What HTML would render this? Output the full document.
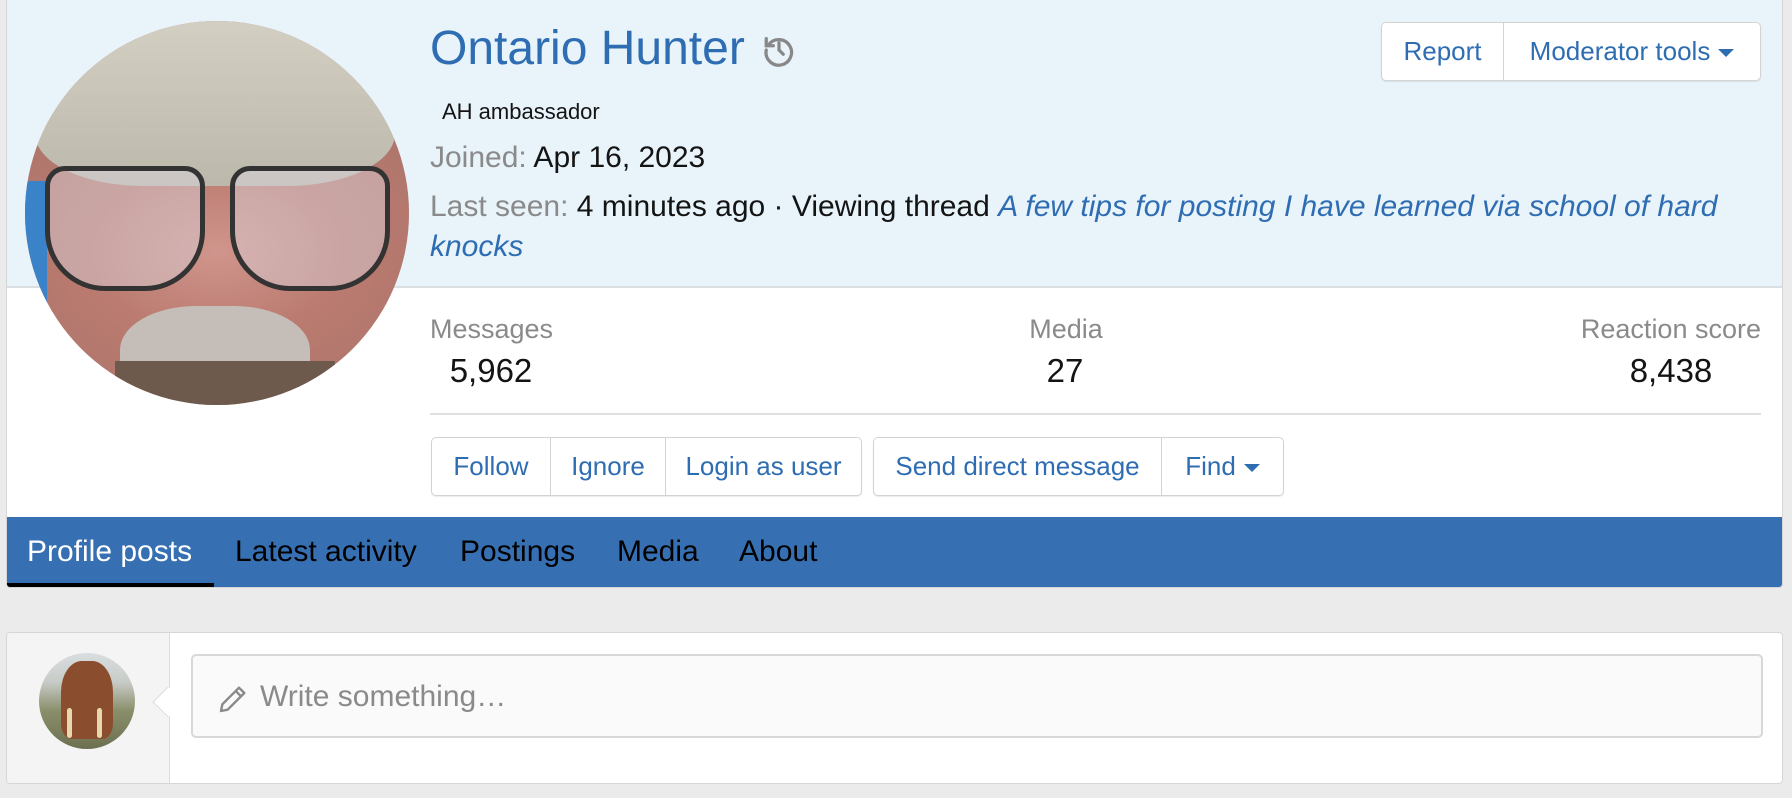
<!DOCTYPE html>
<html><head><meta charset="utf-8"><style>
*{box-sizing:border-box;margin:0;padding:0}
body{width:1792px;height:798px;background:#ebebeb;font-family:"Liberation Sans",Arial,sans-serif;position:relative;overflow:hidden;color:#141414}
.abs{position:absolute;white-space:nowrap}
.card{position:absolute;left:6px;top:0;width:1777px;height:588px;background:#fff;border:1px solid #d6d6d6;border-top:none;border-radius:0 0 4px 4px;overflow:hidden}
.band{position:absolute;left:0;top:0;width:100%;height:288px;background:#e8f3fa;border-bottom:2px solid #dcdfe2}
.blue{color:#2f6db3}
.grey{color:#8a8a8a}
.btn{position:absolute;height:59px;border:1px solid #d3d3d3;border-radius:5px;background:#fff;display:flex;box-shadow:0 1px 1px rgba(0,0,0,.08)}
.btn div{display:flex;align-items:center;justify-content:center;color:#2f6db3;font-size:26px;border-left:1px solid #d3d3d3;height:100%;white-space:nowrap}
.btn div:first-child{border-left:none}
.tri{display:inline-block;width:0;height:0;border-left:8px solid transparent;border-right:8px solid transparent;border-top:8px solid #2f6db3;margin-left:8px;margin-top:2px}
.tabs{position:absolute;left:0;top:517px;width:100%;height:71px;background:#3670b2}
.tab{position:absolute;top:18px;font-size:30px;color:#000;white-space:nowrap}
.c{position:absolute;white-space:nowrap;transform:translateX(-50%)}
</style></head><body>
<div class="card">
 <div class="band"></div>
 <div class="tabs">
  <div class="tab" style="left:20px;color:#fff">Profile posts</div>
  <div style="position:absolute;left:0;top:66px;width:207px;height:5px;background:#000"></div>
  <div class="tab" style="left:228px">Latest activity</div>
  <div class="tab" style="left:453px">Postings</div>
  <div class="tab" style="left:610px">Media</div>
  <div class="tab" style="left:732px">About</div>
 </div>
</div>
<!-- avatar -->
<div class="abs" style="left:25px;top:21px;width:384px;height:384px;border-radius:50%;overflow:hidden;background:#b0766c">
 <div style="position:absolute;left:0;top:0;width:384px;height:384px;background:radial-gradient(ellipse 60% 40% at 50% 60%,#d0958c 0%,#bb7b70 55%,rgba(0,0,0,0) 100%)"></div>
 <div style="position:absolute;left:10px;top:-10px;width:360px;height:175px;border-radius:50% 50% 30% 30%;background:linear-gradient(#d4d0c4,#bcb8ab)"></div>
 <div style="position:absolute;left:0px;top:160px;width:22px;height:140px;background:#3b83c8"></div>
 <div style="position:absolute;left:20px;top:145px;width:160px;height:125px;border:5px solid #333;border-radius:20px 20px 60px 60px;background:rgba(220,215,225,.45)"></div>
 <div style="position:absolute;left:205px;top:145px;width:160px;height:125px;border:5px solid #333;border-radius:20px 20px 60px 60px;background:rgba(220,215,225,.45)"></div>
 <div style="position:absolute;left:95px;top:285px;width:190px;height:110px;border-radius:40%;background:#c5bdb8"></div>
 <div style="position:absolute;left:90px;top:340px;width:220px;height:60px;background:#6e5a4d"></div>
</div>
<div class="abs blue" style="left:430px;top:21px;font-size:48px">Ontario Hunter</div>
<svg class="abs" style="left:762px;top:33px" width="34" height="34" viewBox="0 0 24 24" fill="none" stroke="#888" stroke-width="2.3" stroke-linecap="round"><path d="M4.5 8.5A9 9 0 1 1 3 12"/><path d="M3 4v5h5"/><path d="M12 7v5l3 3"/></svg>
<div class="abs" style="left:442px;top:99px;font-size:22px">AH ambassador</div>
<div class="abs" style="left:430px;top:141px;font-size:30px"><span class="grey">Joined:</span> Apr 16, 2023</div>
<div class="abs" style="left:430px;top:190px;font-size:30px"><span class="grey">Last seen:</span> 4 minutes ago · Viewing thread <i class="blue">A few tips for posting I have learned via school of hard</i></div>
<div class="abs" style="left:430px;top:230px;font-size:30px"><i class="blue">knocks</i></div>
<div class="btn" style="left:1381px;top:22px;width:380px"><div style="width:121px">Report</div><div style="flex:1">Moderator tools<span class="tri"></span></div></div>
<div class="abs grey" style="left:430px;top:314px;font-size:27px">Messages</div>
<div class="c" style="left:491px;top:352px;font-size:33px">5,962</div>
<div class="c grey" style="left:1066px;top:314px;font-size:27px">Media</div>
<div class="c" style="left:1065px;top:352px;font-size:33px">27</div>
<div class="abs grey" style="right:31px;top:314px;font-size:27px">Reaction score</div>
<div class="c" style="left:1671px;top:352px;font-size:33px">8,438</div>
<div class="abs" style="left:430px;top:413px;width:1331px;height:2px;background:#e0e0e0"></div>
<div class="btn" style="left:431px;top:437px;width:431px"><div style="width:118px">Follow</div><div style="width:115px">Ignore</div><div style="flex:1">Login as user</div></div>
<div class="btn" style="left:873px;top:437px;width:411px"><div style="width:287px">Send direct message</div><div style="flex:1">Find<span class="tri"></span></div></div>
<!-- bottom card -->
<div class="abs" style="left:6px;top:632px;width:1777px;height:152px;background:#fff;border:1px solid #d6d6d6;border-radius:4px;overflow:hidden">
 <div style="position:absolute;left:0;top:0;width:163px;height:100%;background:#f4f4f4;border-right:1px solid #dcdcdc"></div>
 <div style="position:absolute;left:150px;top:58px;width:22px;height:22px;background:#fff;border-left:1px solid #dcdcdc;border-bottom:1px solid #dcdcdc;transform:rotate(45deg)"></div>
 <div style="position:absolute;left:32px;top:20px;width:96px;height:96px;border-radius:50%;overflow:hidden;background:linear-gradient(#d9dde0 0%,#c8ccc8 30%,#8a8f6a 60%,#6d7050 100%)">
  <div style="position:absolute;left:22px;top:8px;width:52px;height:78px;border-radius:40% 40% 20% 20%;background:#8a4e2e"></div>
  <div style="position:absolute;left:28px;top:55px;width:5px;height:30px;background:#e8d8b0;border-radius:3px"></div>
  <div style="position:absolute;left:58px;top:55px;width:5px;height:30px;background:#e8d8b0;border-radius:3px"></div>
 </div>
 <div style="position:absolute;left:184px;top:21px;width:1572px;height:84px;background:#fafafa;border:2px solid #d8d8d8;border-radius:5px"></div>
 <svg style="position:absolute;left:210px;top:50px" width="32" height="32" viewBox="0 0 24 24" fill="none" stroke="#8a8a8a" stroke-width="1.8" stroke-linejoin="round"><path d="M16.5 3.5l4 4L8 20l-5 1 1-5z"/><path d="M14 6l4 4"/></svg>
 <div style="position:absolute;left:253px;top:47px;font-size:30px;color:#8a8a8a;white-space:nowrap">Write something…</div>
</div>
</body></html>
